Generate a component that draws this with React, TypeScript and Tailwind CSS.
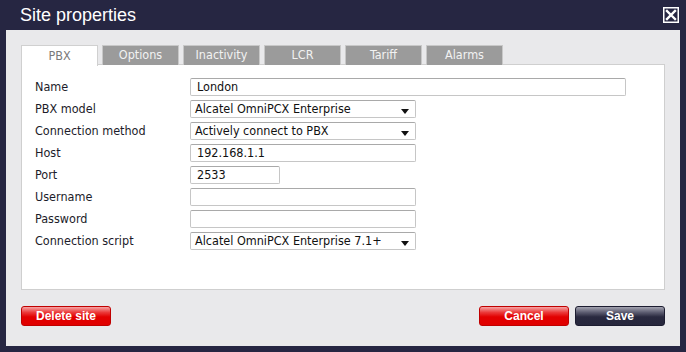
import React from "react";

type Field = {
  label: string;
  value: string;
  kind: "text" | "select";
  width: string;
};

const fields: Field[] = [
  { label: "Name", value: "London", kind: "text", width: "w-[436px]" },
  { label: "PBX model", value: "Alcatel OmniPCX Enterprise", kind: "select", width: "w-[226px]" },
  { label: "Connection method", value: "Actively connect to PBX", kind: "select", width: "w-[226px]" },
  { label: "Host", value: "192.168.1.1", kind: "text", width: "w-[226px]" },
  { label: "Port", value: "2533", kind: "text", width: "w-[90px]" },
  { label: "Username", value: "", kind: "text", width: "w-[226px]" },
  { label: "Password", value: "", kind: "text", width: "w-[226px]" },
  { label: "Connection script", value: "Alcatel OmniPCX Enterprise 7.1+", kind: "select", width: "w-[226px]" },
];

const tabs = ["PBX", "Options", "Inactivity", "LCR", "Tariff", "Alarms"];

const CloseIcon = () => (
  <svg width="16" height="16" viewBox="0 0 16 16">
    <rect x="0.75" y="0.75" width="14.5" height="14.5" fill="none" stroke="#fff" strokeWidth="1.5" />
    <path d="M4 4 L12 12 M12 4 L4 12" stroke="#fff" strokeWidth="2.4" strokeLinecap="square" />
  </svg>
);

const Arrow = () => (
  <svg width="8" height="5" viewBox="0 0 8 5" className="absolute right-[6px] top-[8px]">
    <path d="M0 0 H8 L4 5 Z" fill="#111" />
  </svg>
);

const FieldRow = ({ field }: { field: Field }) => (
  <div className="flex items-center h-[22px]">
    <div className="w-[155px] text-[#1c1c2a]">{field.label}</div>
    <div
      className={`relative h-[18px] ${field.width} bg-white border border-[#c6c6c6] border-t-[#a9a9a9] rounded-[2px] flex items-center ${
        field.kind === "select" ? "pl-[4px]" : "pl-[6px]"
      } text-[#111]`}
    >
      {field.value}
      {field.kind === "select" && <Arrow />}
    </div>
  </div>
);

const Button = ({ label, tone }: { label: string; tone: "red" | "navy" }) => (
  <button
    className={`w-[90px] h-[20px] rounded-[3px] border text-white font-bold text-[12px] font-['Liberation_Sans',sans-serif] ${
      tone === "red"
        ? "border-[#c00000] bg-[linear-gradient(to_bottom,#f6a5a5_0%,#eb3a3a_30%,#e20000_55%,#e00000_100%)]"
        : "border-[#1c1c30] bg-[linear-gradient(to_bottom,#a3a3b0_0%,#5c5c70_30%,#29293f_55%,#26263c_100%)]"
    }`}
  >
    {label}
  </button>
);

export default function App() {
  return (
    <div className="w-[686px] h-[352px] bg-[#262642] flex flex-col px-[6px] pb-[6px] font-['DejaVu_Sans_Condensed','Liberation_Sans',sans-serif] text-[12.5px]">
      <div className="h-[30px] flex items-center justify-between pl-[14px] pr-[1px]">
        <span className="text-white text-[18px] font-['Liberation_Sans',sans-serif] leading-none">
          Site properties
        </span>
        <CloseIcon />
      </div>
      <div className="flex-1 bg-[#e9e9eb] pt-[15px] px-[15px] flex flex-col">
        <div className="flex gap-[4px] h-[20px] relative z-10 -mb-px">
          {tabs.map((t, i) => (
            <div
              key={t}
              className={`w-[77px] flex items-center justify-center border border-b-0 ${
                i === 0
                  ? "bg-white border-[#d0d0d0] text-[#7a7a7a] h-[21px]"
                  : "bg-[#9b9b9b] border-[#c8c8c8] text-[#f2f2f2] h-[20px]"
              }`}
            >
              {t}
            </div>
          ))}
        </div>
        <div className="h-[226px] bg-white border border-[#cfcfcf] pt-[11px] pl-[13px]">
          {fields.map((f) => (
            <FieldRow key={f.label} field={f} />
          ))}
        </div>
        <div className="flex justify-between mt-[16px]">
          <Button label="Delete site" tone="red" />
          <div className="flex gap-[6px]">
            <Button label="Cancel" tone="red" />
            <Button label="Save" tone="navy" />
          </div>
        </div>
      </div>
    </div>
  );
}
